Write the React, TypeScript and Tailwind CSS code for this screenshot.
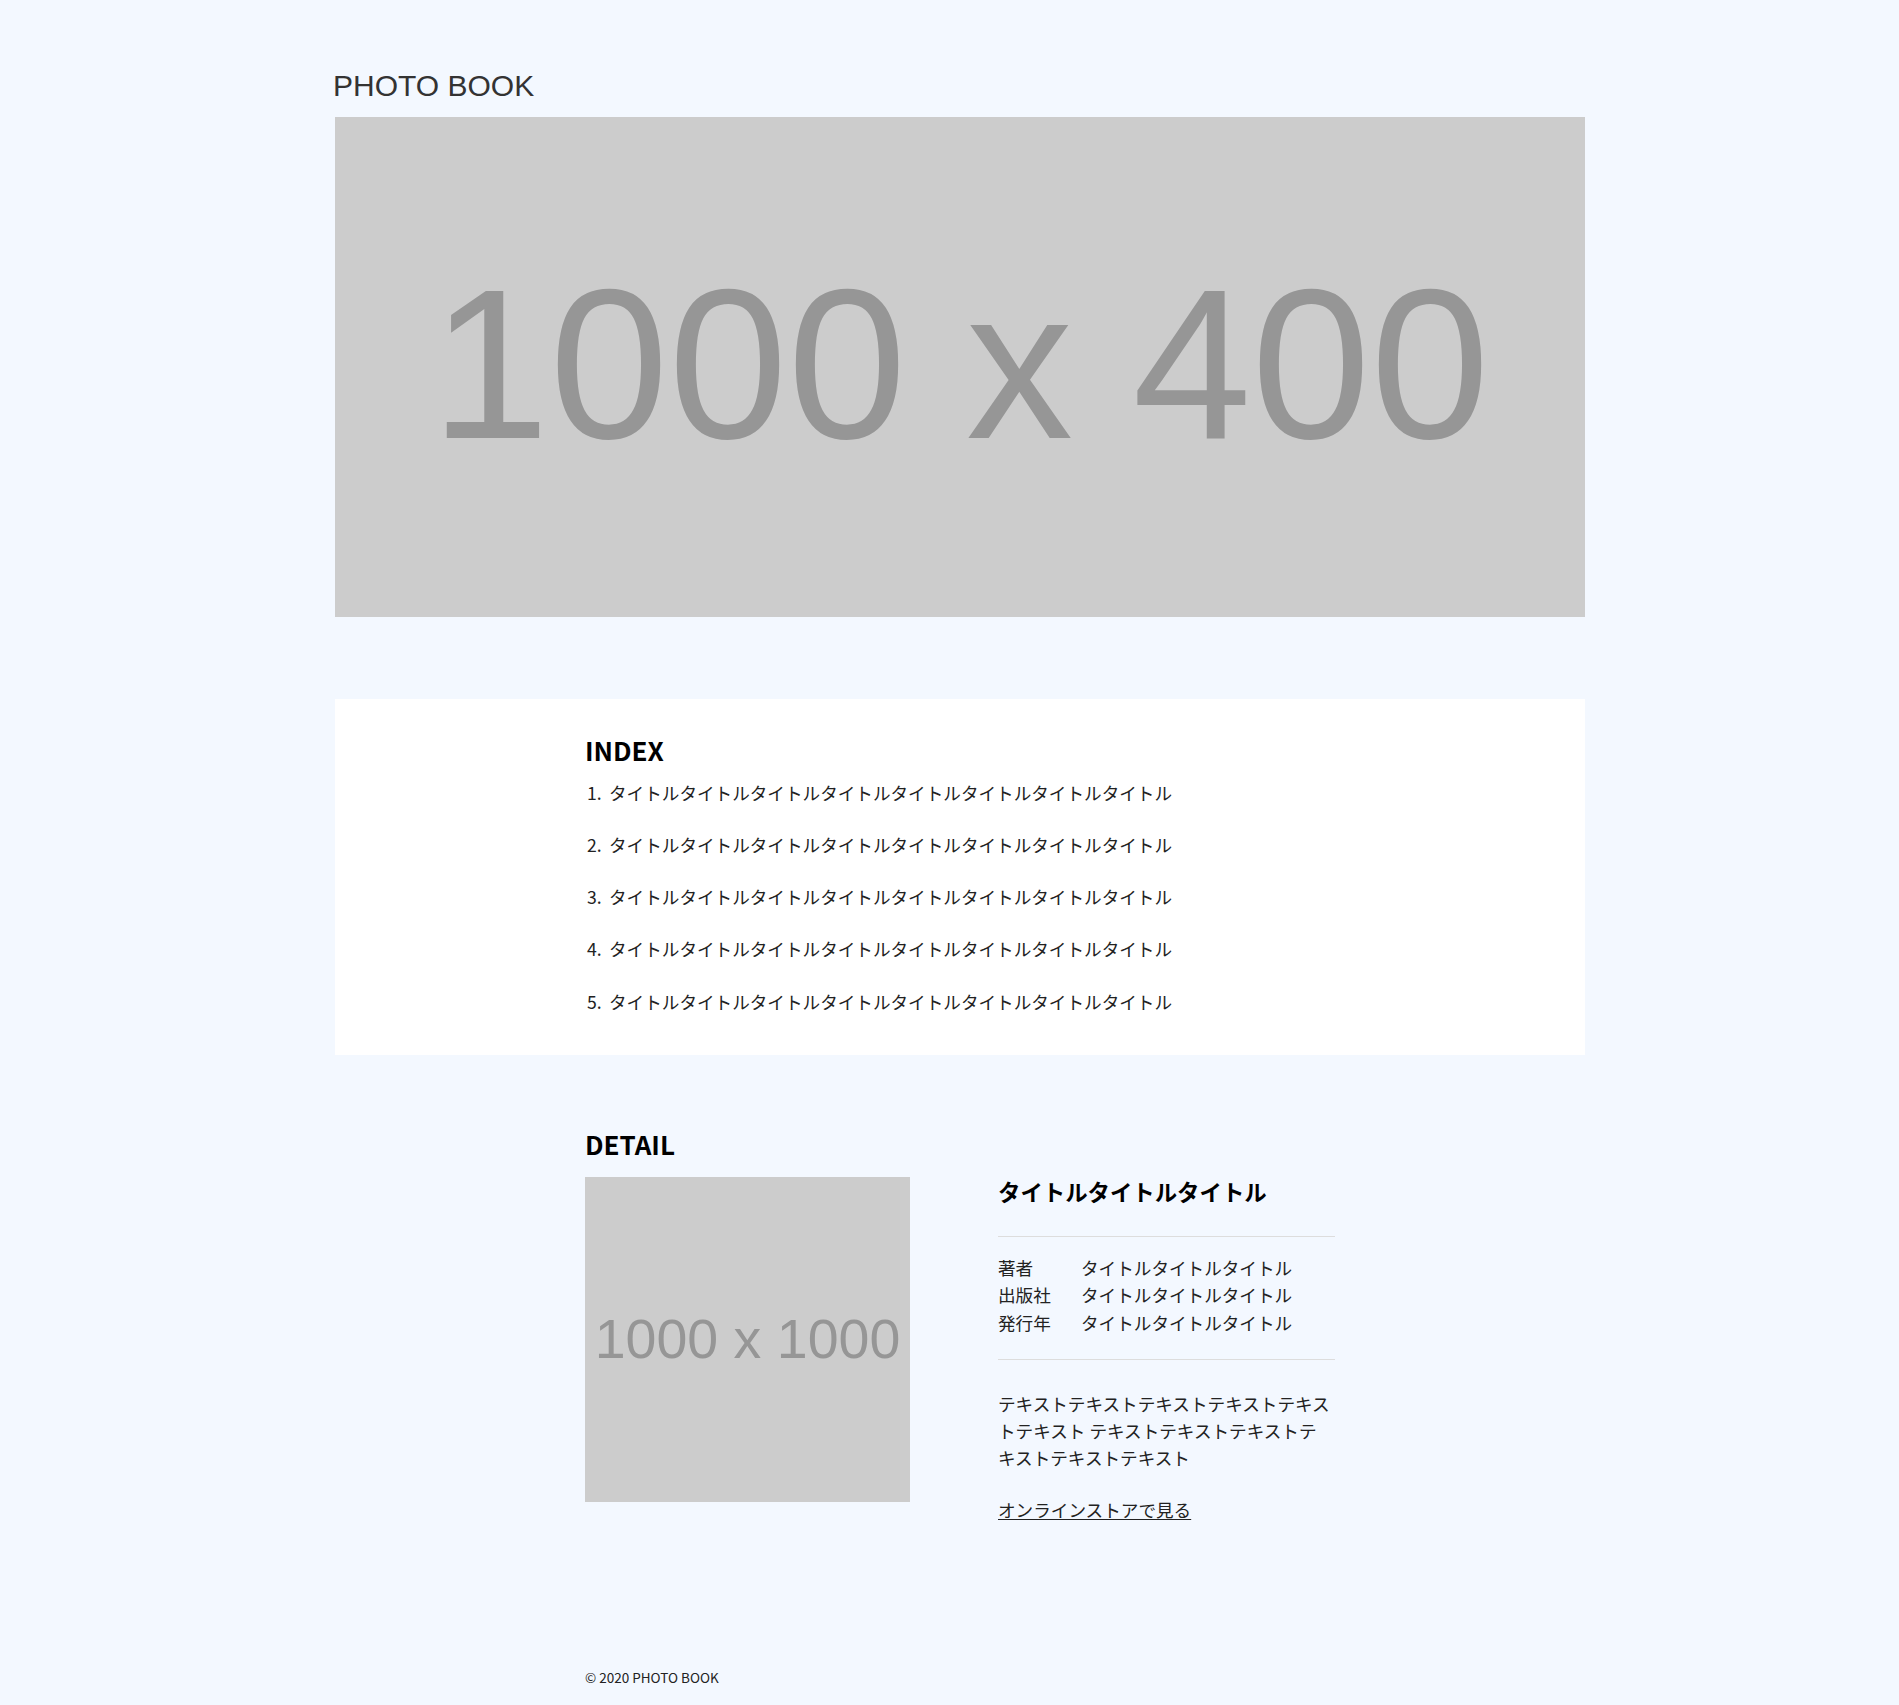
import React from "react";

const TITLE = "タイトル".repeat(8);

export default function App() {
  return (
    <div className="min-h-screen bg-[#f3f8ff] font-['Noto_Sans_CJK_JP',sans-serif] text-[#333]">
      <div className="ml-[335px] w-[1250px] pt-[69px] pb-[18px]">
        <h1 className="-ml-[2px] font-['Liberation_Sans',Arial,sans-serif] text-[30px] leading-[34.5px] text-[#333]">
          PHOTO BOOK
        </h1>
        <div className="mt-[13px] flex h-[500px] items-center justify-center bg-[#cccccc] pb-[6px]">
          <span className="font-['Liberation_Sans',Arial,sans-serif] text-[214px] leading-none text-[#969696]">
            1000 x 400
          </span>
        </div>

        <section className="mt-[82px] bg-white pt-[30px] pb-[40px]">
          <div className="mx-auto w-[750px]">
            <h2 className="text-[26px] font-bold leading-[42px] text-black">INDEX</h2>
            <ol className="mt-[8px] flex flex-col gap-[25px] pl-[2px] text-[17.6px] leading-[27.3px] text-[#222]">
              {[1, 2, 3, 4, 5].map((n) => (
                <li key={n} className="flex">
                  <span className="w-[22px] shrink-0">{n}.</span>
                  <span>{TITLE}</span>
                </li>
              ))}
            </ol>
          </div>
        </section>

        <section className="mx-auto mt-[68px] w-[750px]">
          <h2 className="text-[26px] font-bold leading-[42px] text-black">DETAIL</h2>
          <div className="mt-[12px] flex gap-[88px]">
            <div className="flex h-[325px] w-[325px] shrink-0 items-center justify-center bg-[#cccccc]">
              <span className="font-['Liberation_Sans',Arial,sans-serif] text-[55.5px] leading-none text-[#969696]">
                1000 x 1000
              </span>
            </div>
            <div className="w-[337px] text-[17.6px] leading-[27.3px] text-[#222]">
              <h3 className="text-[22.4px] font-bold leading-[29px] text-black">タイトルタイトルタイトル</h3>
              <div className="mt-[30px] border-t border-[#dddddd] pt-[17px] pb-[23px]">
                <dl className="grid grid-cols-[83px_1fr]">
                  <dt>著者</dt>
                  <dd>タイトルタイトルタイトル</dd>
                  <dt>出版社</dt>
                  <dd>タイトルタイトルタイトル</dd>
                  <dt>発行年</dt>
                  <dd>タイトルタイトルタイトル</dd>
                </dl>
              </div>
              <div className="border-t border-[#dddddd] pt-[30px]">
                <p className="w-[335px]">
                  テキストテキストテキストテキストテキストテキスト テキストテキストテキストテキストテキストテキスト
                </p>
                <a href="#" className="mt-[24px] inline-block text-[#222] underline underline-offset-2">
                  オンラインストアで見る
                </a>
              </div>
            </div>
          </div>
          <footer className="mt-[144px] text-[13.5px] leading-[20px] text-[#222]">© 2020 PHOTO BOOK</footer>
        </section>
      </div>
    </div>
  );
}
